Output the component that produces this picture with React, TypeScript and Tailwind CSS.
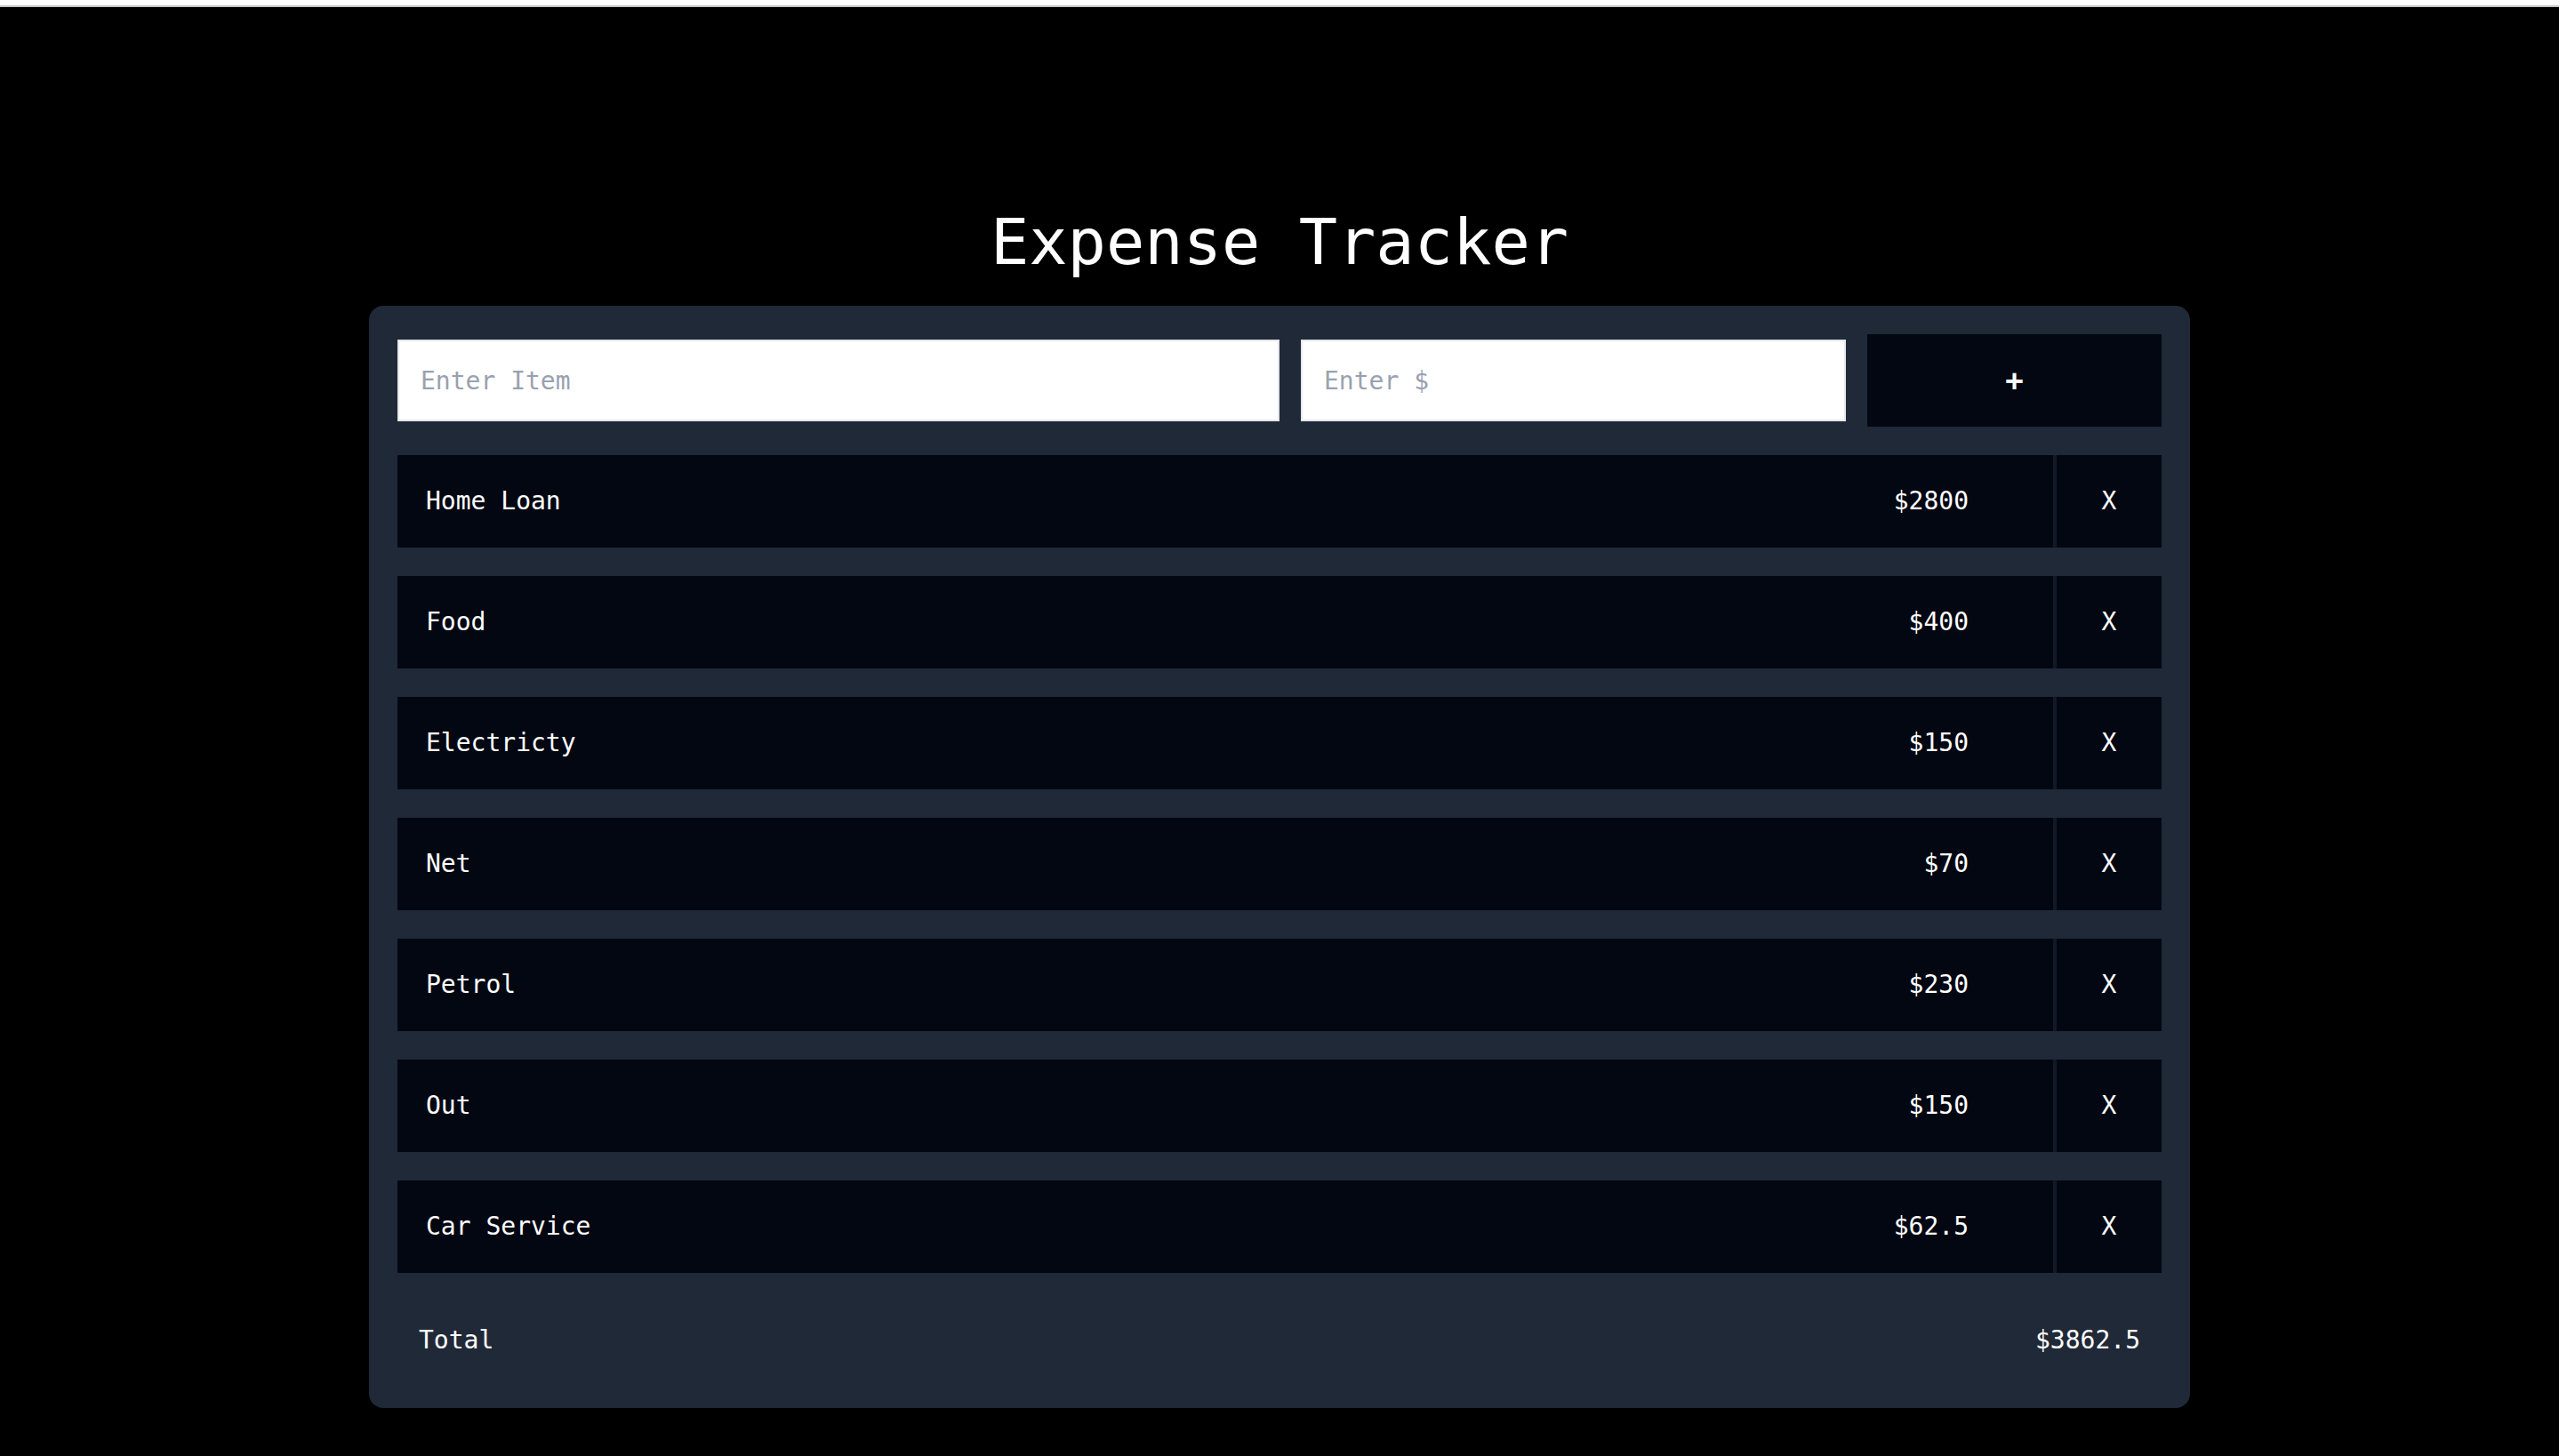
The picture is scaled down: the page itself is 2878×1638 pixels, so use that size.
import React from "react";

const items = [
  { name: "Home Loan", amount: "$2800" },
  { name: "Food", amount: "$400" },
  { name: "Electricty", amount: "$150" },
  { name: "Net", amount: "$70" },
  { name: "Petrol", amount: "$230" },
  { name: "Out", amount: "$150" },
  { name: "Car Service", amount: "$62.5" },
];

export default function App() {
  return (
    <div
      className="min-h-screen bg-black text-white"
      style={{ fontFamily: '"DejaVu Sans Mono", "Liberation Mono", monospace' }}
    >
      <div className="h-[6px] bg-white" />
      <div className="h-[2px] bg-[#c6c6c6]" />
      <div className="flex flex-col items-center pt-[228px]">
        <h1 className="text-[72px] leading-[72px] font-normal text-white mb-[36px]">Expense Tracker</h1>
        <div className="w-[2048px] rounded-2xl bg-[#1f2937] p-8">
          <div className="flex items-center gap-6 h-[104px]">
            <input
              placeholder="Enter Item"
              className="w-[992px] h-[92px] bg-white border-2 border-gray-200 px-6 text-[28px] text-black placeholder:text-gray-400 outline-none"
            />
            <input
              placeholder="Enter $"
              className="w-[613px] h-[92px] bg-white border-2 border-gray-200 px-6 text-[28px] text-black placeholder:text-gray-400 outline-none"
            />
            <button className="flex-1 h-[104px] bg-[#030712] text-white text-[34px] font-bold flex items-center justify-center">
              +
            </button>
          </div>
          <div className="mt-8 flex flex-col gap-8">
            {items.map((it) => (
              <div key={it.name} className="flex h-[104px] bg-[#030712] text-[28px] text-white">
                <div className="flex-1 flex items-center pl-[32px]">{it.name}</div>
                <div className="flex items-center pr-[95px]">{it.amount}</div>
                <div className="w-[4px] bg-[#111827]" />
                <div className="w-[118px] flex items-center justify-center">X</div>
              </div>
            ))}
          </div>
          <div className="mt-8 h-[88px] flex items-center justify-between px-6 text-[28px] text-white">
            <span>Total</span>
            <span>$3862.5</span>
          </div>
        </div>
      </div>
    </div>
  );
}
